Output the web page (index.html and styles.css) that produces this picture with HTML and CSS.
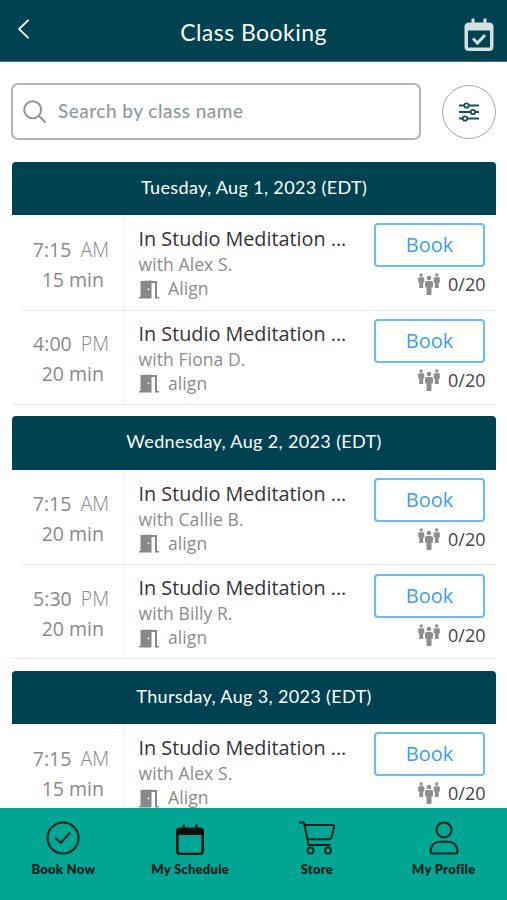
FILE: index.html
```html
<!DOCTYPE html>
<html lang="en">
<head>
<meta charset="utf-8">
<meta name="viewport" content="width=device-width, initial-scale=1">
<title>Class Booking</title>
<link rel="stylesheet" href="styles.css">
</head>
<body>
<svg class="sprite" aria-hidden="true">
  <symbol id="door" viewBox="0 0 20 19"><path fill="currentColor" d="M1.500 1L12.500 0.500V18.500H0V17H1.500ZM9.500 8.500a.9.900 0 1 0 .01 0ZM12.500 1H18V17H20V18.500H16V3H12.500Z" fill-rule="evenodd"/></symbol>
  <symbol id="people" viewBox="0 0 22 23"><g fill="currentColor"><g id="person"><circle cx="3.200" cy="2" r="1.700"/><path d="M1.200 4.200H5.200Q6.300 4.200 6.300 5.300V9.500H5.200V15H1.300V9.500H.2V5.300Q.2 4.200 1.200 4.200Z"/></g><use href="#person" x="15.500"/><circle cx="11" cy="5" r="2.300"/><path d="M8.500 8H13.500Q15 8 15 9.500V14.500H13.500V21Q13.500 22 12.500 22H9.500Q8.500 22 8.500 21V14.500H7V9.500Q7 8 8.500 8Z"/></g></symbol>
</svg>
<div class="app">
  <header class="topbar">
    <svg class="back" viewBox="0 0 12 20"><path d="M10.500 .8L1 10L10.500 19.200"/></svg>
    <h1>Class Booking</h1>
    <svg class="cal" viewBox="0 0 30 34"><path fill="currentColor" fill-rule="evenodd" d="M7.500 .5H10.500V4.500H19.500V.5H22.500V4.500H25Q29.500 4.500 29.500 9V28.500Q29.500 33 25 33H5Q.5 33 .5 28.500V9Q.5 4.500 5 4.500H7.500ZM4 12.500V29.500H26V12.500Z"/><path class="cal-check" d="M9 20.500L13.500 25L21 17"/></svg>
  </header>
  <div class="search-row">
    <div class="search"><svg viewBox="0 0 24 24"><circle cx="9.700" cy="9.700" r="8.500"/><path d="M15.800 15.800L22.500 22.500"/></svg><span class="placeholder">Search by class name</span></div>
    <div class="filter"><svg viewBox="0 0 20 20"><path d="M0 3.500H5.500M9.500 3.500H20M0 10H12M16 10H20M0 16.500H4M8 16.500H20"/><circle cx="7.500" cy="3.500" r="2.200"/><circle cx="14" cy="10" r="2.200"/><circle cx="6" cy="16.500" r="2.200"/></svg></div>
  </div>
  <main>
    <section class="day">
      <h2>Tuesday, Aug 1, 2023 (EDT)</h2>
      <article class="slot">
        <div class="time"><p>7:15 <span>AM</span></p><p class="dur">15 min</p></div>
        <div class="info"><h3>In Studio Meditation ...</h3><p>with Alex S.</p><p class="room"><svg><use href="#door"/></svg>Align</p></div>
        <div class="action"><button>Book</button><p><svg><use href="#people"/></svg>0/20</p></div>
      </article>
      <article class="slot">
        <div class="time"><p>4:00 <span>PM</span></p><p class="dur">20 min</p></div>
        <div class="info"><h3>In Studio Meditation ...</h3><p>with Fiona D.</p><p class="room"><svg><use href="#door"/></svg>align</p></div>
        <div class="action"><button>Book</button><p><svg><use href="#people"/></svg>0/20</p></div>
      </article>
    </section>
    <section class="day">
      <h2>Wednesday, Aug 2, 2023 (EDT)</h2>
      <article class="slot">
        <div class="time"><p>7:15 <span>AM</span></p><p class="dur">20 min</p></div>
        <div class="info"><h3>In Studio Meditation ...</h3><p>with Callie B.</p><p class="room"><svg><use href="#door"/></svg>align</p></div>
        <div class="action"><button>Book</button><p><svg><use href="#people"/></svg>0/20</p></div>
      </article>
      <article class="slot">
        <div class="time"><p>5:30 <span>PM</span></p><p class="dur">20 min</p></div>
        <div class="info"><h3>In Studio Meditation ...</h3><p>with Billy R.</p><p class="room"><svg><use href="#door"/></svg>align</p></div>
        <div class="action"><button>Book</button><p><svg><use href="#people"/></svg>0/20</p></div>
      </article>
    </section>
    <section class="day">
      <h2>Thursday, Aug 3, 2023 (EDT)</h2>
      <article class="slot">
        <div class="time"><p>7:15 <span>AM</span></p><p class="dur">15 min</p></div>
        <div class="info"><h3>In Studio Meditation ...</h3><p>with Alex S.</p><p class="room"><svg><use href="#door"/></svg>Align</p></div>
        <div class="action"><button>Book</button><p><svg><use href="#people"/></svg>0/20</p></div>
      </article>
    </section>
  </main>
  <nav class="tabs">
    <a><svg viewBox="0 0 36 36"><circle cx="18" cy="18" r="15.500"/><path d="M11 18.500L15.800 22.700L24.500 13.500"/></svg><span>Book Now</span></a>
    <a><svg viewBox="0 0 36 36"><path class="solid" fill-rule="evenodd" d="M10.500 4.500H12.800V7.500H23.200V4.500H25.500V7.500H28Q32 7.500 32 11.500V31Q32 35 28 35H8Q4 35 4 31V11.500Q4 7.500 8 7.500H10.500ZM6.500 15V31Q6.500 32.700 8.200 32.700H27.800Q29.500 32.700 29.500 31V15Z"/></svg><span>My Schedule</span></a>
    <a><svg viewBox="0 0 36 36"><path d="M.5 2.500H4Q5 2.500 5.300 3.700L9.500 25H30.500M6 5H33.500Q35.500 5 35 7L32.500 17.500Q32 19.300 30 19.300H8.700"/><circle cx="11.500" cy="30.500" r="3"/><circle cx="29" cy="30.500" r="3"/></svg><span>Store</span></a>
    <a><svg viewBox="0 0 36 36"><circle cx="18" cy="10" r="7.500"/><path d="M4.500 31C5 24 10 21.700 14 21.700H22C26 21.700 31 24 31.500 31Q31.500 33.500 29.500 33.500H6.500Q4.500 33.500 4.500 31Z"/></svg><span>My Profile</span></a>
  </nav>
</div>
</body>
</html>
```
FILE: styles.css
```css
* { box-sizing: border-box; margin: 0; padding: 0; }
body { background: #fff; font-family: "Open Sans", sans-serif; overflow: hidden; }
.sprite { display: none; }
svg { display: block; flex: none; }
.app { display: flex; flex-direction: column; height: 900px; overflow: hidden; }

.topbar { flex: none; height: 62px; background: #004251; color: #fff; display: grid; grid-template-columns: 60px 1fr 60px; align-items: center; border-bottom: 1px solid #40717c; }
.topbar h1 { font: 400 23px/30px "Lato", sans-serif; text-align: center; padding-top: 3px; letter-spacing: 0.45px; white-space: nowrap; }
.back { width: 12px; height: 20px; margin: -4px 0 0 17.500px; fill: none; stroke: #fff; stroke-width: 1.8; }
.cal { width: 30px; height: 34px; margin: 8px 0 0 17px; color: #d3e0e4; }
.cal-check { fill: none; stroke: currentColor; stroke-width: 3; }

.search-row { flex: none; display: flex; align-items: center; gap: 21px; height: 57px; margin: 21px 11px 0; }
.search { display: flex; align-items: center; flex: 1; height: 57px; border: 2px solid #b0b4b5; border-radius: 7px; padding-left: 10px; gap: 12px; }
.search svg { width: 24px; height: 24px; fill: none; stroke: #919598; stroke-width: 2; }
.placeholder { font: 500 19px/26px "Lato", sans-serif; letter-spacing: 0.48px; color: #92979c; white-space: nowrap; margin: -2px 0 0 -1px; }
.filter { width: 54px; height: 54px; border: 1.5px solid #a4a7a9; border-radius: 50%; display: grid; place-items: center; }
.filter svg { width: 20px; height: 20px; fill: none; stroke: #16505f; stroke-width: 1.8; }

main { flex: 1; min-height: 0; overflow: hidden; padding: 21.500px 11px 0 12px; }
.day { margin-bottom: 11.700px; }
.day h2 { height: 53.500px; background: #004251; color: #fff; border-radius: 4px 4px 0 0; font: 400 18px/51px "Lato", sans-serif; letter-spacing: 0.36px; text-align: center; white-space: nowrap; }
.slot { display: grid; grid-template-columns: 113px 1fr 122px; height: 95.500px; background: linear-gradient(#e7eaeb, #e7eaeb) 10px 100% / 100% 1px no-repeat; }
.slot + .slot { height: 94px; background-position: 0 100%; }
.time { border-right: 1px solid #eceeef; padding: 19.500px 20px 0 0; text-align: right; font-size: 19.500px; line-height: 30px; color: #898989; white-space: nowrap; }
.time p { margin-right: -5px; }
.time .dur { margin-right: 0; }
.time span { font-weight: 300; margin-left: 4px; }
.info { padding: 10px 0 0 13.500px; color: #8b8b8b; font-size: 17.500px; letter-spacing: 0.1px; line-height: 24.500px; white-space: nowrap; }
.info h3 { font-size: 19.800px; font-weight: 400; letter-spacing: 0; line-height: 27px; color: #333; }
.info h3 + p { line-height: 24px; }
.room { display: flex; align-items: center; gap: 9.500px; }
.room svg { width: 20px; height: 19px; color: #888; margin-top: 2px; }
.slot + .slot .time { padding-top: 18.500px; }
.slot + .slot .info { padding-top: 9px; }
.action { padding: 8px 10.500px 0 0; }
.action button { display: block; width: 111px; height: 44px; border: 2px solid #6bbcf0; border-radius: 4px; background: #fff; color: #3b9fe4; font: 400 20px/40px "Open Sans", sans-serif; }
.slot + .slot .action { padding-top: 8.600px; }
.action p { display: flex; justify-content: flex-end; align-items: center; gap: 8px; color: #444; font-size: 18px; line-height: 34px; }
.action svg { width: 22px; height: 23px; color: #8e8e8e; margin-top: 1px; }

.tabs { flex: none; height: 92px; background: #00a594; display: grid; grid-template-columns: repeat(4, 1fr); color: #06221f; }
.tabs a { display: flex; flex-direction: column; align-items: center; padding-top: 12px; }
.tabs svg { width: 36px; height: 36px; fill: none; stroke: #06221f; stroke-width: 2; stroke-linejoin: round; stroke-linecap: round; }
.tabs .solid { fill: #06120f; stroke: none; }
.tabs span { font: 800 13px/18px "Lato", sans-serif; letter-spacing: 0.25px; margin-top: 3.500px; white-space: nowrap; }
```
